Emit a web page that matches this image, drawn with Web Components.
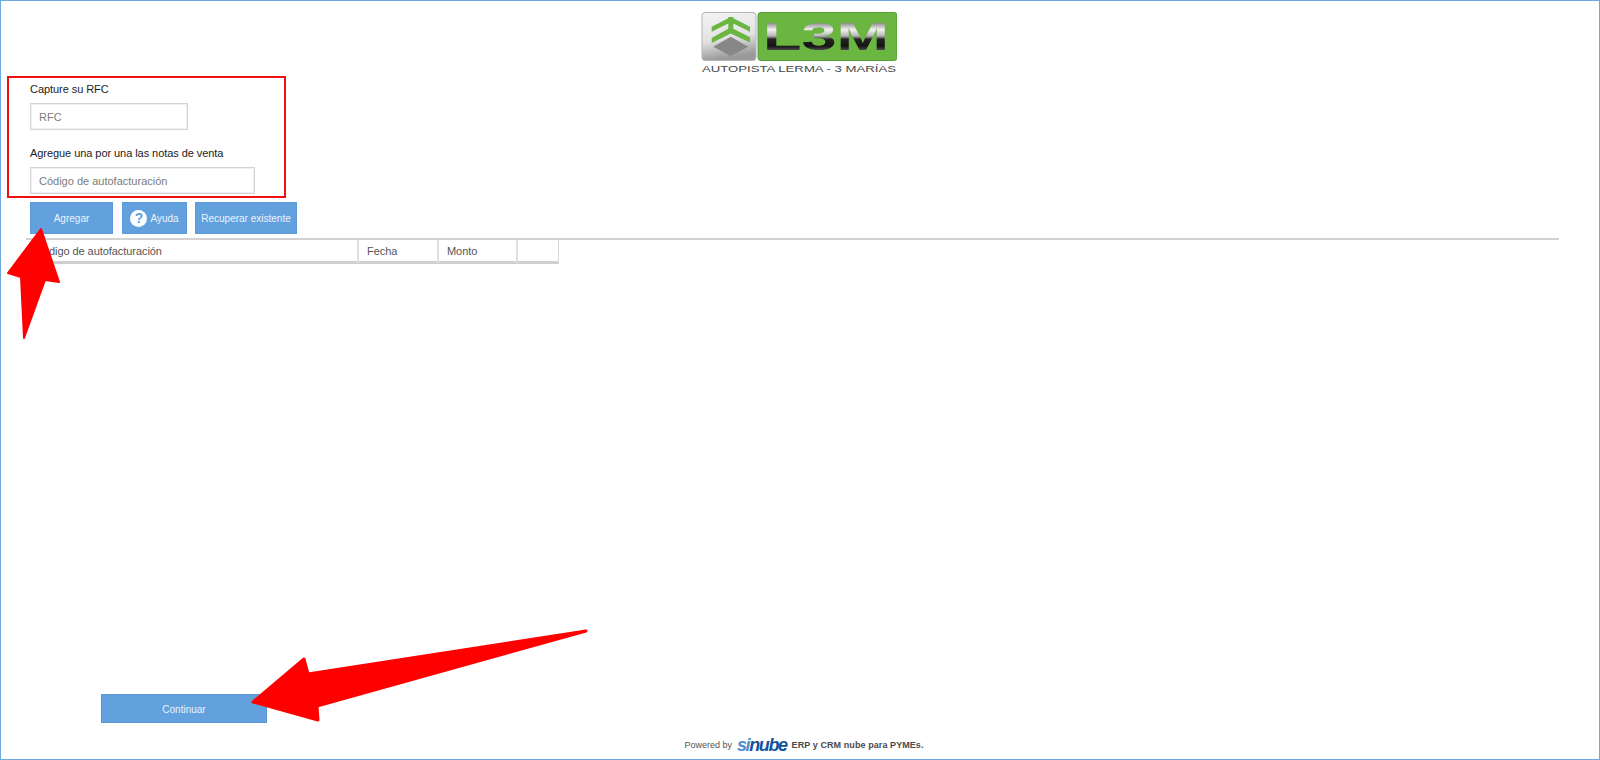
<!DOCTYPE html>
<html lang="es">
<head>
<meta charset="utf-8">
<title>Autofacturación L3M</title>
<style>
  html, body { margin: 0; padding: 0; background: #fff; }
  body { font-family: "Liberation Sans", Arial, sans-serif; font-size: 11px; }
</style>
</head>
<body>
<page-shell>
  <site-logo></site-logo>
  <form-field label="Capture su RFC" placeholder="RFC" width="158"></form-field>
  <form-field label="Agregue una por una las notas de venta" placeholder="Código de autofacturación" width="225" gap="16"></form-field>
  <button-row>
    <ui-button width="83">Agregar</ui-button>
    <ui-button width="65" help style="margin-left: 1px">Ayuda</ui-button>
    <ui-button width="102">Recuperar existente</ui-button>
  </button-row>
  <notes-table></notes-table>
  <ui-button slot="bottom" width="166" height="29">Continuar</ui-button>
  <page-footer slot="footer"></page-footer>
  <note-marks slot="marks"></note-marks>
</page-shell>

<script>
const shellTemplate = document.createElement('template');
shellTemplate.innerHTML = `
  <style>
    :host {
      display: block;
      position: relative;
      box-sizing: border-box;
      width: 1600px;
      height: 760px;
      border: 1px solid #69a9e3;
      overflow: hidden;
    }
    .layout {
      display: flex;
      flex-direction: column;
      height: 100%;
    }
    .top { flex: 1; }
    .bottom { padding-left: 100px; }
  </style>
  <div class="layout">
    <div class="top"><slot></slot></div>
    <div class="bottom"><slot name="bottom"></slot></div>
    <slot name="footer"></slot>
  </div>
  <slot name="marks"></slot>
`;

class PageShell extends HTMLElement {
  constructor() {
    super();
    this.attachShadow({ mode: 'open' }).appendChild(shellTemplate.content.cloneNode(true));
  }
}
customElements.define('page-shell', PageShell);

const logoTemplate = document.createElement('template');
logoTemplate.innerHTML = `
  <style>
    :host {
      display: flex;
      justify-content: center;
      padding: 11px 2px 0 0;
      height: 70px;
      box-sizing: border-box;
      margin-bottom: 11px;
    }
    svg { display: block; }
  </style>
  <svg width="196" height="62" viewBox="0 0 196 62">
    <defs>
      <linearGradient id="tile" x1="0" y1="0" x2="0.2" y2="1">
        <stop offset="0" stop-color="#f4f4f4"/>
        <stop offset="0.6" stop-color="#e2e2e2"/>
        <stop offset="1" stop-color="#9a9a9a"/>
      </linearGradient>
      <linearGradient id="chrome" gradientUnits="userSpaceOnUse" x1="0" y1="11" x2="0" y2="38">
        <stop offset="0" stop-color="#8e8e8e"/>
        <stop offset="0.25" stop-color="#f2f2f2"/>
        <stop offset="0.48" stop-color="#b4b4b4"/>
        <stop offset="0.6" stop-color="#232323"/>
        <stop offset="0.85" stop-color="#141414"/>
        <stop offset="1" stop-color="#4a4a4a"/>
      </linearGradient>
    </defs>
    <rect x="1" y="0.5" width="54" height="48" rx="3" fill="url(#tile)" stroke="#b4b4b4"/>
    <path d="M10.7 14.7 L27.3 6.3 L27.3 5 L32.3 5 L32.3 6.3 L49 14.7 L49 19.7 L32.3 11.5 L32.3 16.8 L49 25.3 L49 30.6 L29.7 21.5 L10.7 31 L10.7 26 L27.3 16.8 L27.3 11.5 L10.7 19.7 Z" fill="#6bb541"/>
    <path d="M29.7 24.7 L47.3 34.7 L29.7 44 L12.3 34.7 Z" fill="#878787"/>
    <rect x="57" y="0.5" width="139" height="48" rx="3" fill="#6bb541" stroke="#5a9c36"/>
    <text x="62" y="38" font-family="Liberation Sans" font-weight="700" font-size="39" textLength="126" lengthAdjust="spacingAndGlyphs" fill="url(#chrome)">L3M</text>
    <text x="1" y="60" font-family="Liberation Sans" font-size="9.5" textLength="194" lengthAdjust="spacingAndGlyphs" fill="#484848">AUTOPISTA LERMA - 3 MARÍAS</text>
  </svg>
`;

class SiteLogo extends HTMLElement {
  constructor() {
    super();
    this.attachShadow({ mode: 'open' }).appendChild(logoTemplate.content.cloneNode(true));
  }
}
customElements.define('site-logo', SiteLogo);

const fieldTemplate = document.createElement('template');
fieldTemplate.innerHTML = `
  <style>
    :host {
      display: flex;
      flex-direction: column;
      align-items: flex-start;
      gap: 7px;
      padding-left: 29px;
    }
    label {
      font: 11px/14px "Liberation Sans", Arial, sans-serif;
      letter-spacing: -0.06px;
      color: #1c1c1c;
    }
    input {
      box-sizing: border-box;
      height: 27px;
      border: 1px solid #d4d4d4;
      box-shadow: inset 0 0 0 1px #f0f0f0;
      padding: 0 8px;
      margin: 0;
      outline: none;
      font: 11px "Liberation Sans", Arial, sans-serif;
      color: #333;
    }
    input::placeholder { color: #7b7b7b; opacity: 1; }
  </style>
  <label></label>
  <input type="text">
`;

class FormField extends HTMLElement {
  constructor() {
    super();
    this.attachShadow({ mode: 'open' }).appendChild(fieldTemplate.content.cloneNode(true));
    this.$label = this.shadowRoot.querySelector('label');
    this.$input = this.shadowRoot.querySelector('input');
  }

  connectedCallback() {
    this.$label.textContent = this.getAttribute('label');
    this.$input.placeholder = this.getAttribute('placeholder');
    this.$input.style.width = this.getAttribute('width') + 'px';
    if (this.hasAttribute('gap')) this.style.marginTop = this.getAttribute('gap') + 'px';
  }
}
customElements.define('form-field', FormField);

const rowTemplate = document.createElement('template');
rowTemplate.innerHTML = `
  <style>
    :host {
      display: flex;
      gap: 8px;
      padding: 8px 0 4px 29px;
    }
  </style>
  <slot></slot>
`;

class ButtonRow extends HTMLElement {
  constructor() {
    super();
    this.attachShadow({ mode: 'open' }).appendChild(rowTemplate.content.cloneNode(true));
  }
}
customElements.define('button-row', ButtonRow);

const buttonTemplate = document.createElement('template');
buttonTemplate.innerHTML = `
  <style>
    :host { display: block; }
    button {
      display: flex;
      align-items: center;
      justify-content: center;
      gap: 3px;
      box-sizing: border-box;
      width: 100%;
      height: 100%;
      padding: 1px 0 0;
      margin: 0;
      background: #62a1de;
      border: 1px solid #5b9ad6;
      color: #eaf3fb;
      font: 10px "Liberation Sans", Arial, sans-serif;
    }
    .help {
      width: 17px;
      height: 17px;
      border-radius: 50%;
      background: #fff;
      color: #62a1de;
      font: 700 14px/17px "Liberation Sans", Arial, sans-serif;
      text-align: center;
    }
  </style>
  <button type="button"><slot></slot></button>
`;

class UiButton extends HTMLElement {
  constructor() {
    super();
    this.attachShadow({ mode: 'open' }).appendChild(buttonTemplate.content.cloneNode(true));
  }

  connectedCallback() {
    this.style.width = this.getAttribute('width') + 'px';
    this.style.height = (this.getAttribute('height') || 32) + 'px';
    if (this.hasAttribute('help')) {
      const mark = document.createElement('span');
      mark.className = 'help';
      mark.textContent = '?';
      const button = this.shadowRoot.querySelector('button');
      button.insertBefore(mark, button.firstChild);
    }
  }
}
customElements.define('ui-button', UiButton);

const tableTemplate = document.createElement('template');
tableTemplate.innerHTML = `
  <style>
    :host {
      display: block;
      margin-left: 25px;
      width: 1533px;
      border-top: 2px solid #d2d2d2;
    }
    .head {
      display: grid;
      grid-template-columns: 333px 80px 79px 40px;
      width: 533px;
      box-sizing: border-box;
      height: 24px;
      border-bottom: 3px solid #cfcfcf;
      border-right: 1px solid #dadada;
    }
    .head div {
      box-sizing: border-box;
      padding-left: 8px;
      border-right: 2px solid #dfdfdf;
      font: 11px/23px "Liberation Sans", Arial, sans-serif;
      letter-spacing: -0.06px;
      color: #555;
    }
    .head div:first-child { padding-left: 9px; }
    .head div:last-child { border-right: 0; }
  </style>
  <div class="head">
    <div>Código de autofacturación</div>
    <div>Fecha</div>
    <div>Monto</div>
    <div></div>
  </div>
`;

class NotesTable extends HTMLElement {
  constructor() {
    super();
    this.attachShadow({ mode: 'open' }).appendChild(tableTemplate.content.cloneNode(true));
  }
}
customElements.define('notes-table', NotesTable);

const footerTemplate = document.createElement('template');
footerTemplate.innerHTML = `
  <style>
    :host {
      display: flex;
      justify-content: center;
      align-items: center;
      gap: 5px;
      height: 36px;
      padding: 8px 0 0 8px;
      box-sizing: border-box;
      font: 9px "Liberation Sans", Arial, sans-serif;
      color: #555;
    }
    .brand {
      font: italic 700 18px/16px "Liberation Sans", Arial, sans-serif;
      letter-spacing: -1.4px;
      color: #13529d;
    }
    .brand span { color: #4f8fd0; }
    b { font-weight: 700; letter-spacing: 0.08px; color: #4a4a4a; }
  </style>
  <span>Powered by</span>
  <span class="brand"><span>si</span>nube</span>
  <b>ERP y CRM nube para PYMEs.</b>
`;

class PageFooter extends HTMLElement {
  constructor() {
    super();
    this.attachShadow({ mode: 'open' }).appendChild(footerTemplate.content.cloneNode(true));
  }
}
customElements.define('page-footer', PageFooter);

// red annotations painted on top of the screenshot, coordinates are the page's own
const marksTemplate = document.createElement('template');
marksTemplate.innerHTML = `
  <style>
    :host {
      position: absolute;
      left: -1px;
      top: -1px;
      width: 1600px;
      height: 760px;
      pointer-events: none;
    }
    svg { display: block; }
  </style>
  <svg width="1600" height="760" viewBox="0 0 1600 760">
    <rect x="8" y="77" width="277" height="120" fill="none" stroke="#f01010" stroke-width="2"/>
    <path d="M41 229 L8 273 L21 277 L24 338 L45 280 L59 282 Z" fill="#ff0000" stroke="#ff0000" stroke-width="2" stroke-linejoin="round"/>
    <path d="M253 702 L304 659 L308 674 L586 631 L317 706 L318 720 Z" fill="#ff0000" stroke="#ff0000" stroke-width="3" stroke-linejoin="round"/>
  </svg>
`;

class NoteMarks extends HTMLElement {
  constructor() {
    super();
    this.attachShadow({ mode: 'open' }).appendChild(marksTemplate.content.cloneNode(true));
  }
}
customElements.define('note-marks', NoteMarks);
</script>
</body>
</html>
